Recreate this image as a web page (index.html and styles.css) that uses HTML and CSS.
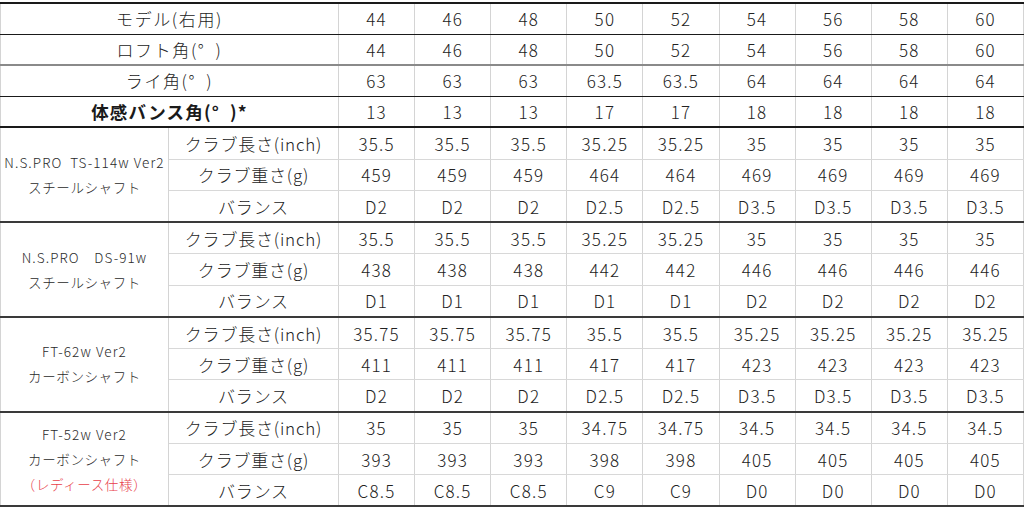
FILE: index.html
```html
<!DOCTYPE html>
<html lang="ja">
<head>
<meta charset="utf-8">
<link rel="stylesheet" href="styles.css">
</head>
<body>
<table class="spec">
<colgroup>
<col class="c-shaft"><col class="c-item">
<col><col><col><col><col><col><col><col><col>
</colgroup>
<tbody>
<tr class="r-head r1"><th colspan="2">モデル(右用)</th><td>44</td><td>46</td><td>48</td><td>50</td><td>52</td><td>54</td><td>56</td><td>58</td><td>60</td></tr>
<tr class="r-head r2"><th colspan="2">ロフト角(°&ensp;)</th><td>44</td><td>46</td><td>48</td><td>50</td><td>52</td><td>54</td><td>56</td><td>58</td><td>60</td></tr>
<tr class="r-head r3"><th colspan="2">ライ角(°&ensp;)</th><td>63</td><td>63</td><td>63</td><td>63.5</td><td>63.5</td><td>64</td><td>64</td><td>64</td><td>64</td></tr>
<tr class="r-head r4"><th colspan="2" class="bold">体感バンス角(°&ensp;)*</th><td>13</td><td>13</td><td>13</td><td>17</td><td>17</td><td>18</td><td>18</td><td>18</td><td>18</td></tr>

<tr class="g-first"><th rowspan="3" class="shaft"><span class="latin">N.S.PRO&ensp;TS-114w Ver2</span><br>スチールシャフト</th><th>クラブ長さ(inch)</th><td>35.5</td><td>35.5</td><td>35.5</td><td>35.25</td><td>35.25</td><td>35</td><td>35</td><td>35</td><td>35</td></tr>
<tr><th>クラブ重さ(g)</th><td>459</td><td>459</td><td>459</td><td>464</td><td>464</td><td>469</td><td>469</td><td>469</td><td>469</td></tr>
<tr><th>バランス</th><td>D2</td><td>D2</td><td>D2</td><td>D2.5</td><td>D2.5</td><td>D3.5</td><td>D3.5</td><td>D3.5</td><td>D3.5</td></tr>

<tr class="g-first"><th rowspan="3" class="shaft"><span class="latin">N.S.PRO&emsp;DS-91w</span><br>スチールシャフト</th><th>クラブ長さ(inch)</th><td>35.5</td><td>35.5</td><td>35.5</td><td>35.25</td><td>35.25</td><td>35</td><td>35</td><td>35</td><td>35</td></tr>
<tr><th>クラブ重さ(g)</th><td>438</td><td>438</td><td>438</td><td>442</td><td>442</td><td>446</td><td>446</td><td>446</td><td>446</td></tr>
<tr><th>バランス</th><td>D1</td><td>D1</td><td>D1</td><td>D1</td><td>D1</td><td>D2</td><td>D2</td><td>D2</td><td>D2</td></tr>

<tr class="g-first"><th rowspan="3" class="shaft"><span class="latin">FT-62w Ver2</span><br>カーボンシャフト</th><th>クラブ長さ(inch)</th><td>35.75</td><td>35.75</td><td>35.75</td><td>35.5</td><td>35.5</td><td>35.25</td><td>35.25</td><td>35.25</td><td>35.25</td></tr>
<tr><th>クラブ重さ(g)</th><td>411</td><td>411</td><td>411</td><td>417</td><td>417</td><td>423</td><td>423</td><td>423</td><td>423</td></tr>
<tr><th>バランス</th><td>D2</td><td>D2</td><td>D2</td><td>D2.5</td><td>D2.5</td><td>D3.5</td><td>D3.5</td><td>D3.5</td><td>D3.5</td></tr>

<tr class="g-first"><th rowspan="3" class="shaft"><span class="latin">FT-52w Ver2</span><br>カーボンシャフト<br><span class="red">（レディース仕様）</span></th><th>クラブ長さ(inch)</th><td>35</td><td>35</td><td>35</td><td>34.75</td><td>34.75</td><td>34.5</td><td>34.5</td><td>34.5</td><td>34.5</td></tr>
<tr><th>クラブ重さ(g)</th><td>393</td><td>393</td><td>393</td><td>398</td><td>398</td><td>405</td><td>405</td><td>405</td><td>405</td></tr>
<tr class="last"><th>バランス</th><td>C8.5</td><td>C8.5</td><td>C8.5</td><td>C9</td><td>C9</td><td>D0</td><td>D0</td><td>D0</td><td>D0</td></tr>
</tbody>
</table>
</body>
</html>
```
FILE: styles.css
```css
html, body {
  margin: 0;
  padding: 0;
  background: #ffffff;
}
body {
  padding-top: 2px;
  font-family: "Noto Sans CJK JP", "Noto Sans", sans-serif;
  color: #222222;
}
.spec {
  width: 1024px;
  border-collapse: collapse;
  table-layout: fixed;
  border-top: 2px solid #1a1a1a;
  border-right: 1px solid #1a1a1a;
  border-left: 1px solid #d0d0d0;
  border-bottom: 2px solid #3a3a3a;
}
.c-shaft { width: 168px; }
.c-item { width: 170px; }
.spec th, .spec td {
  height: 30.25px;
  padding: 0;
  text-align: center;
  vertical-align: middle;
  font-size: 17px;
  font-weight: 300;
  letter-spacing: 0.8px;
  border-left: 1px solid #d4d4d4;
  border-right: 1px solid #d4d4d4;
  border-top: 1px solid #d8d8d8;
  border-bottom: 1px solid #d8d8d8;
  line-height: 1;
  white-space: nowrap;
}
.spec td {
  letter-spacing: 1.2px;
}
.r-head th, .r-head td { height: 29.6px; }
.r-head th { letter-spacing: 1.6px; }
.r1 th, .r1 td { border-bottom: 1px solid #1a1a1a; }
.r2 th, .r2 td { border-bottom: 2px solid #8a8a8a; }
.r3 th, .r3 td { border-bottom: 1px solid #1a1a1a; }
.r4 th, .r4 td { border-bottom: 2px solid #1a1a1a; }
.g-first th, .g-first td { border-top: 2px solid #3a3a3a; }
.spec .bold { font-weight: 700; font-size: 17.5px; letter-spacing: 1.2px; color: #1a1a1a; }
.spec .shaft {
  font-size: 13.5px;
  line-height: 25px;
  letter-spacing: 0.6px;
  color: #2a2a2a;
}
.latin { letter-spacing: 1.1px; }
.red { color: #e8404a; }
```
